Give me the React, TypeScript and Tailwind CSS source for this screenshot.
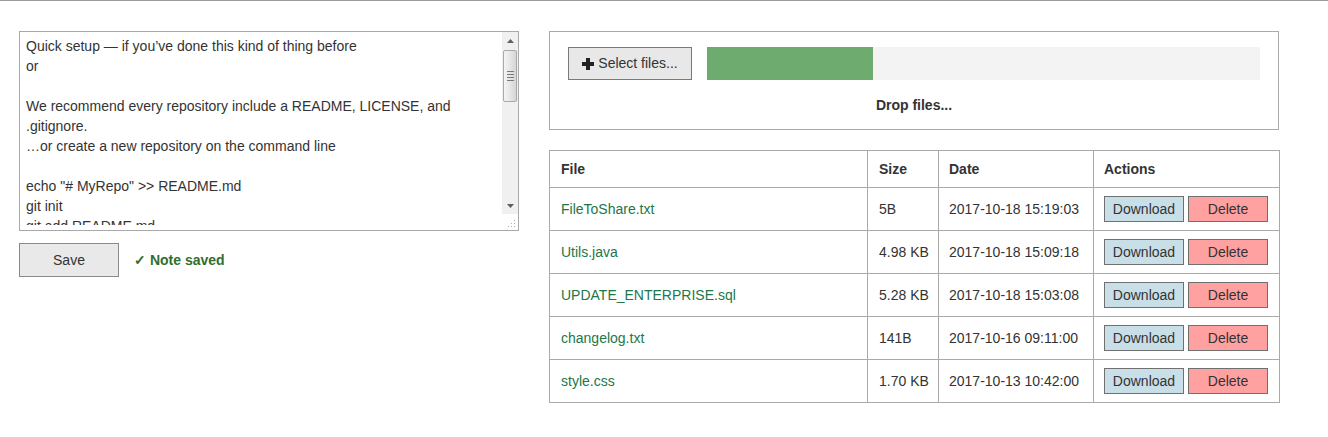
const noteLines = [
  "Quick setup — if you’ve done this kind of thing before",
  "or",
  "",
  "We recommend every repository include a README, LICENSE, and",
  ".gitignore.",
  "…or create a new repository on the command line",
  "",
  'echo "# MyRepo" >> README.md',
  "git init",
  "git add README.md",
  'git commit -m "first commit"',
];

const files = [
  { name: "FileToShare.txt", size: "5B", date: "2017-10-18 15:19:03" },
  { name: "Utils.java", size: "4.98 KB", date: "2017-10-18 15:09:18" },
  { name: "UPDATE_ENTERPRISE.sql", size: "5.28 KB", date: "2017-10-18 15:03:08" },
  { name: "changelog.txt", size: "141B", date: "2017-10-16 09:11:00" },
  { name: "style.css", size: "1.70 KB", date: "2017-10-13 10:42:00" },
];

function Scrollbar() {
  return (
    <div className="flex w-[16px] shrink-0 flex-col bg-[#f0f0f0]">
      <div className="flex h-[17px] items-center justify-center">
        <svg width="7" height="4" viewBox="0 0 7 4">
          <path d="M0 4 L3.5 0 L7 4 Z" fill="#606060" />
        </svg>
      </div>
      <div className="mx-[1px] mt-[1px] flex h-[52px] flex-col items-center justify-center gap-[2px] rounded-[2px] border border-[#a9a9a9] bg-gradient-to-r from-[#f4f4f4] via-[#e6e6e6] to-[#d6d6d6]">
        <div className="h-[1px] w-[7px] bg-[#7a7a7a]" />
        <div className="h-[1px] w-[7px] bg-[#7a7a7a]" />
        <div className="h-[1px] w-[7px] bg-[#7a7a7a]" />
        <div className="h-[1px] w-[7px] bg-[#7a7a7a]" />
      </div>
      <div className="flex-1" />
      <div className="flex h-[16px] items-center justify-center">
        <svg width="7" height="4" viewBox="0 0 7 4">
          <path d="M0 0 L3.5 4 L7 0 Z" fill="#606060" />
        </svg>
      </div>
      <div className="flex h-[16px] items-end justify-end bg-white pb-[2px] pr-[2px]">
        <svg width="8" height="8" viewBox="0 0 8 8">
          <rect x="6" y="0" width="1" height="1" fill="#b0b0b0" />
          <rect x="6" y="3" width="1" height="1" fill="#b0b0b0" />
          <rect x="3" y="3" width="1" height="1" fill="#b0b0b0" />
          <rect x="6" y="6" width="1" height="1" fill="#b0b0b0" />
          <rect x="3" y="6" width="1" height="1" fill="#b0b0b0" />
          <rect x="0" y="6" width="1" height="1" fill="#b0b0b0" />
        </svg>
      </div>
    </div>
  );
}

function NotePanel() {
  return (
    <div className="w-[500px] shrink-0">
      <div className="flex h-[200px] border border-[#a9a9a9] bg-white">
        <div className="h-[193px] flex-1 overflow-hidden px-[6px] pt-[4px] text-[14px] leading-[20px] text-[#333]">
          {noteLines.map((line, i) => (
            <div key={i} className="h-[20px] whitespace-pre">
              {line}
            </div>
          ))}
        </div>
        <Scrollbar />
      </div>
      <div className="mt-[12px] flex items-center gap-[15px]">
        <button className="h-[34px] w-[100px] border border-[#8a8a8a] bg-[#e9e9e9] text-[14px] text-[#333]">
          Save
        </button>
        <span className="text-[14px] font-bold text-[#2f6f2f]">✓ Note saved</span>
      </div>
    </div>
  );
}

function UploadPanel() {
  return (
    <div className="border border-[#aaa] px-[18px] pb-[14px] pt-[15px]">
      <div className="flex items-center gap-[15px]">
        <button className="flex h-[33px] w-[124px] shrink-0 items-center justify-center gap-[4px] border border-[#7a7a7a] bg-[#e8e8e8] text-[14px] text-[#333]">
          <svg width="12" height="12" viewBox="0 0 12 12">
            <rect x="4" y="0" width="4" height="12" fill="#222" />
            <rect x="0" y="4" width="12" height="4" fill="#222" />
          </svg>
          Select files...
        </button>
        <div className="flex h-[33px] flex-1 bg-[#f3f3f3]">
          <div className="h-full w-[166px] bg-[#6dab6f]" />
        </div>
      </div>
      <div className="mt-[15px] text-center text-[14px] font-bold leading-[20px] text-[#333]">Drop files...</div>
    </div>
  );
}

function FilesTable() {
  return (
    <table className="mt-[20px] w-[730px] table-fixed border-collapse whitespace-nowrap text-[14px] text-[#333]">
      <colgroup>
        <col className="w-[318px]" />
        <col className="w-[71px]" />
        <col className="w-[155px]" />
        <col className="w-[186px]" />
      </colgroup>
      <thead>
        <tr>
          <th className="h-[37px] border border-[#aaa] px-[11px] text-left font-bold">File</th>
          <th className="h-[37px] border border-[#aaa] px-[11px] text-left font-bold">Size</th>
          <th className="h-[37px] border border-[#aaa] px-[10px] text-left font-bold">Date</th>
          <th className="h-[37px] border border-[#aaa] px-[10px] text-left font-bold">Actions</th>
        </tr>
      </thead>
      <tbody>
        {files.map((f) => (
          <tr key={f.name}>
            <td className="h-[43px] border border-[#aaa] px-[11px] text-[#22774a]">{f.name}</td>
            <td className="h-[43px] border border-[#aaa] px-[11px]">{f.size}</td>
            <td className="h-[43px] border border-[#aaa] px-[10px]">{f.date}</td>
            <td className="h-[43px] border border-[#aaa] px-[10px]">
              <div className="flex gap-[4px]">
                <button className="h-[26px] w-[80px] border border-[#707070] bg-[#c9dfe8] text-[14px] text-[#333]">
                  Download
                </button>
                <button className="h-[26px] w-[80px] border border-[#707070] bg-[#ffa1a1] text-[14px] text-[#333]">
                  Delete
                </button>
              </div>
            </td>
          </tr>
        ))}
      </tbody>
    </table>
  );
}

export default function App() {
  return (
    <div className="min-h-[437px] border-t border-[#9a9a9a] bg-white font-['Liberation_Sans',Arial,sans-serif]">
      <div className="flex pl-[19px] pt-[30px]">
        <NotePanel />
        <div className="ml-[30px] w-[730px] shrink-0">
          <UploadPanel />
          <FilesTable />
        </div>
      </div>
    </div>
  );
}
